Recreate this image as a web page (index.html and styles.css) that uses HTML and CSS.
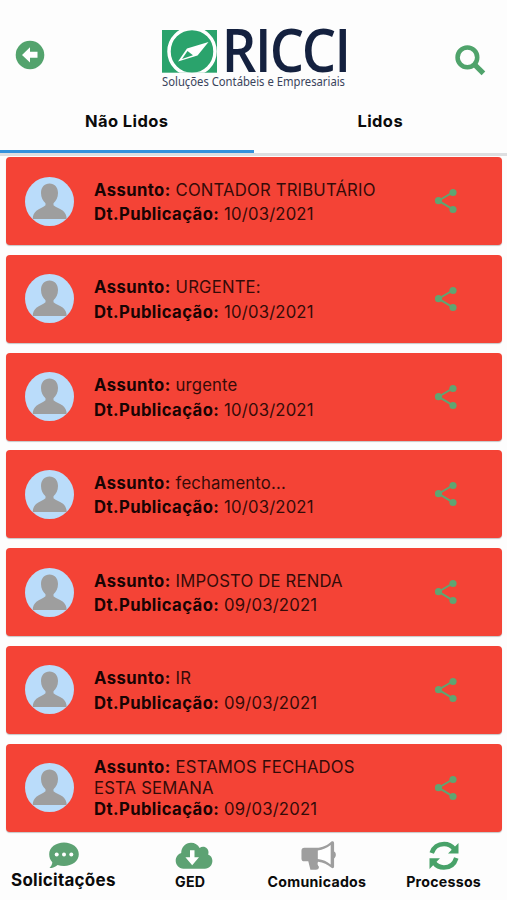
FILE: index.html
```html
<!DOCTYPE html>
<html lang="pt-BR">
<head>
<meta charset="utf-8">
<title>Comunicados</title>
<link rel="stylesheet" href="styles.css">
</head>
<body>
<svg class="defs" width="0" height="0">
  <symbol id="person" viewBox="0 0 49 49">
    <circle cx="24.500" cy="24.500" r="24.500" fill="#badcfa"/>
    <path fill="#9e9e9e" d="M24.500 6.500c5 0 8.500 3.700 8.500 9.500 0 4.500-2 8-4.500 10.200v2c2.500 2.500 6.500 3 9.500 5.500 2.300 2 3.600 4.700 3.700 8.300H7.700c.1-3.600 1.400-6.300 3.700-8.300 3-2.500 6.600-3 9.100-5.500v-2C18 24 16 20.500 16 16c0-5.800 3.500-9.500 8.500-9.500z"/>
  </symbol>
  <symbol id="share" viewBox="0 0 24 26">
    <path d="M18.500 4.500 4.500 12.700l14 8.500" fill="none" stroke="#5fa572" stroke-width="2"/>
    <g fill="#5fa572"><circle cx="19" cy="4.500" r="3.600"/><circle cx="4.500" cy="12.700" r="3.600"/><circle cx="19" cy="21.500" r="3.600"/></g>
  </symbol>
</svg>
<div class="app">
  <header class="top">
    <svg class="back" viewBox="0 0 30 30"><circle cx="15" cy="15" r="14.300" fill="#53a36d"/><path d="M7 15 15 7.300v4.500h7.500v6H15v4.700z" fill="#fff"/></svg>
    <svg class="logo" viewBox="0 0 190 64">
      <rect x="4" y="2" width="55" height="42.700" fill="#2aa36c"/>
      <svg x="4" y="2" width="55" height="42.700" viewBox="4 2 55 42.700">
        <circle cx="34" cy="23.400" r="23" fill="none" stroke="#fff" stroke-width="3.500"/>
      </svg>
      <path d="M50.500 14 39.500 27.500 20 33.500 29 20.500z" fill="#fff"/>
      <path d="M29.500 23 35 27.300 24 31z" fill="#2aa36c"/>
      <text class="brand" transform="scale(.92 1)" x="69.300 105.400 121.400 156.200 191.800" y="44.300">RICCI</text>
      <text class="slogan" x="4" y="58.300" textLength="183" lengthAdjust="spacingAndGlyphs">Soluções Contábeis e Empresariais</text>
    </svg>
    <svg class="search" viewBox="0 0 30 30"><circle cx="12" cy="12" r="9.500" fill="none" stroke="#4fa36b" stroke-width="4.400"/><path d="m18.500 18.500 9 9" stroke="#4fa36b" stroke-width="5"/></svg>
  </header>
  <nav class="tabs"><div class="tab active">Não Lidos</div><div class="tab">Lidos</div></nav>
  <main class="list">
    <article class="card"><svg class="avatar"><use href="#person"/></svg><div class="info"><p><b>Assunto:</b> CONTADOR TRIBUTÁRIO</p><p><b>Dt.Publicação:</b> 10/03/2021</p></div><svg class="share"><use href="#share"/></svg></article>
    <article class="card"><svg class="avatar"><use href="#person"/></svg><div class="info"><p><b>Assunto:</b> URGENTE:</p><p><b>Dt.Publicação:</b> 10/03/2021</p></div><svg class="share"><use href="#share"/></svg></article>
    <article class="card"><svg class="avatar"><use href="#person"/></svg><div class="info"><p><b>Assunto:</b> urgente</p><p><b>Dt.Publicação:</b> 10/03/2021</p></div><svg class="share"><use href="#share"/></svg></article>
    <article class="card"><svg class="avatar"><use href="#person"/></svg><div class="info"><p><b>Assunto:</b> fechamento...</p><p><b>Dt.Publicação:</b> 10/03/2021</p></div><svg class="share"><use href="#share"/></svg></article>
    <article class="card"><svg class="avatar"><use href="#person"/></svg><div class="info"><p><b>Assunto:</b> IMPOSTO DE RENDA</p><p><b>Dt.Publicação:</b> 09/03/2021</p></div><svg class="share"><use href="#share"/></svg></article>
    <article class="card"><svg class="avatar"><use href="#person"/></svg><div class="info"><p><b>Assunto:</b> IR</p><p><b>Dt.Publicação:</b> 09/03/2021</p></div><svg class="share"><use href="#share"/></svg></article>
    <article class="card dense"><svg class="avatar"><use href="#person"/></svg><div class="info"><p><b>Assunto:</b> ESTAMOS FECHADOS<br>ESTA SEMANA</p><p><b>Dt.Publicação:</b> 09/03/2021</p></div><svg class="share"><use href="#share"/></svg></article>
  </main>
  <footer class="bar">
    <div class="item current">
      <svg viewBox="0 0 38 32"><path fill="#5da273" d="M20 2.500c8.200 0 14.800 5 14.800 11.800S28.200 26 20 26c-2.300 0-4.500-.4-6.400-1.100C11.500 26.800 8.500 28 5.500 28c1.800-1.800 2.700-3.700 2.800-5.700-2-2-3.100-5-3.100-8C5.200 7.500 11.800 2.500 20 2.500z"/><g fill="#fff"><circle cx="12.700" cy="14.500" r="2"/><circle cx="20" cy="14.500" r="2"/><circle cx="27.300" cy="14.500" r="2"/></g></svg>
      <span>Solicitações</span>
    </div>
    <div class="item">
      <svg class="cloud" viewBox="0 0 38 32"><path fill="#5da273" d="M8.500 28.700C4 28.700.7 25 .7 20.800c0-3.700 2.300-6.700 5.500-7.700C6.200 7 10.500 2.700 16 2.700c3.800 0 7 2 8.600 5.200 1-.7 2.200-1.100 3.400-1.100 3.300 0 5.500 2.500 5.500 5.500 0 .8-.1 1.500-.4 2.200 2.500.8 4.300 3.300 4.300 6.300 0 4.300-3 7.900-7.600 7.900z"/><path fill="#fff" d="M15 10.300h4.500v7H24l-6.800 8-6.800-8H15z"/></svg>
      <span>GED</span>
    </div>
    <div class="item">
      <svg class="horn" viewBox="0 0 38 32"><path fill="#9e9e9e" d="M4.500 7.500H17C23 7.500 28 4.800 32 1.300c1.500-.8 3-.2 3 1.600v8.600c2.400 1.100 2.400 5.700 0 7v8.200c0 1.700-1.600 2.300-3 1.200-3.700-3.200-8-5.400-13.500-6-1 2.300-.3 3.800 1 5.100 0 2-1.200 3.100-3.300 3.100h-5.500L8.500 21.500h-4A3 3 0 0 1 1.500 18.500v-8a3 3 0 0 1 3-3z"/><path fill="#fff" d="M18.300 10.300c5.300-.5 9.500-2.600 13.200-5.500v20c-3.700-3-7.900-5-13.200-5.600z"/></svg>
      <span>Comunicados</span>
    </div>
    <div class="item">
      <svg viewBox="0 0 38 32"><g fill="none" stroke="#48a269" stroke-width="4.600"><path d="M6.700 13c2-6 6.800-9 12.400-9 4 0 7.600 1.800 10 5"/><path d="M31.300 18c-2 6.500-6.800 9.500-12.400 9.500-4 0-7.600-1.800-10-5"/></g><path fill="#48a269" d="M33.500 3v10.500H23zM4.500 29V18.200H15z"/></svg>
      <span>Processos</span>
    </div>
  </footer>
</div>
</body>
</html>
```
FILE: styles.css
```css
* { box-sizing: border-box; }
body {
  margin: 0;
  background: #fdfdfd;
  color: #0b0b0b;
  font-family: Inter, "Liberation Sans", sans-serif;
}
.defs { display: block; height: 0; }
svg { display: block; flex: none; }
.app {
  display: flex;
  flex-direction: column;
  width: 507px;
  height: 900px;
  overflow: hidden;
}
.top {
  display: flex;
  justify-content: space-between;
  align-items: flex-start;
  height: 93px;
  padding: 28px 21px 0 15px;
}
.back { width: 30px; height: 30px; margin-top: 12px; }
.logo { width: 190px; height: 64px; margin-left: 6px; overflow: visible; }
.search { width: 31px; height: 31px; margin-top: 17px; }
.brand { font: 650 59px "Open Sans", sans-serif; fill: #14213f; }
.slogan { font: 400 12.5px "Noto Sans", sans-serif; fill: #39435b; }
.tabs {
  display: flex;
  height: 62.5px;
  border-bottom: 3px solid #dedfe1;
}
.tab {
  flex: 1;
  height: 60px;
  padding-top: 17px;
  text-align: center;
  font-size: 16.5px;
  font-weight: 650;
  line-height: 22px;
  letter-spacing: .4px;
}
.active { border-bottom: 3px solid #3592dc; }
.list {
  display: flex;
  flex-direction: column;
  gap: 9.75px;
  padding: 1.6px 5px 0 6px;
}
.card {
  display: flex;
  align-items: center;
  height: 88px;
  padding: 0 44px 0 19px;
  border-radius: 4px;
  background: #f44336;
  box-shadow: 0 1px 1px rgba(0, 0, 0, .22);
}
.avatar { width: 49px; height: 49px; }
.info {
  flex: 1;
  margin-left: 20px;
  padding-top: 2px;
  color: #350b08;
  font-size: 16.7px;
  line-height: 24.5px;
  letter-spacing: .17px;
  white-space: nowrap;
}
.info p { margin: 0; }
.info b { color: #190403; font-weight: 700; letter-spacing: .4px; }
.dense .info { line-height: 20.8px; }
.share { width: 24px; height: 26px; }
.bar { display: flex; padding-top: 8.5px; }
.item {
  flex: 1;
  display: flex;
  flex-direction: column;
  align-items: center;
  font-size: 14.2px;
  font-weight: 650;
  line-height: 20px;
  letter-spacing: .25px;
}
.item svg { width: 38px; height: 32px; }
.item .cloud { margin-left: 8px; }
.item .horn { width: 37px; margin-left: 4px; }
.current { font-size: 17px; line-height: 17px; letter-spacing: .25px; }
```
